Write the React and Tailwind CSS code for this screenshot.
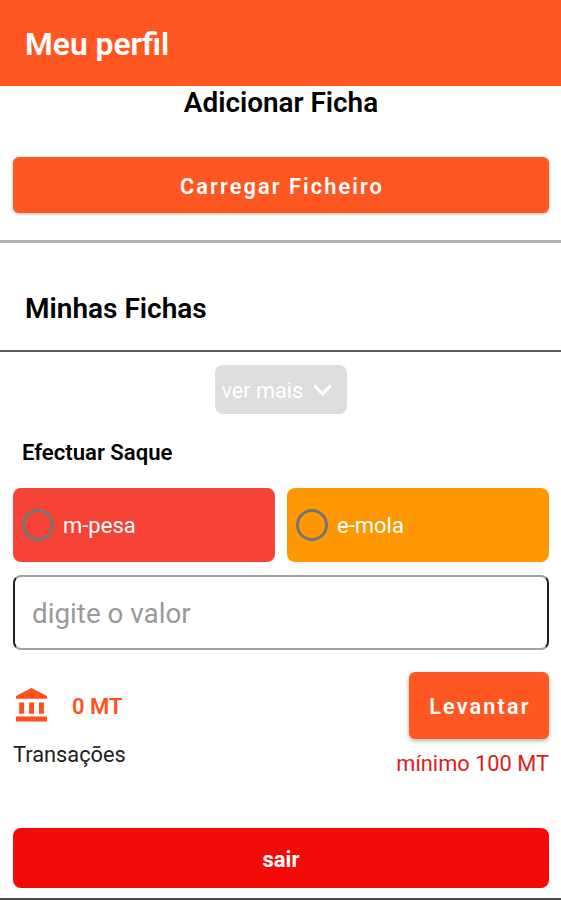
import { useState } from 'react';

const methods = [
  { id: 'm-pesa', color: 'bg-[#f74336]' },
  { id: 'e-mola', color: 'bg-[#ff9800]' },
];

function BankIcon() {
  return (
    <svg className="mb-px ml-[3px] h-[34px] w-[32px]" viewBox="0 0 32 34" fill="currentColor">
      <path d="M15.5 0 0 8v2.7h31V8zM3.2 14.5h4.9v11.2H3.2zM13.1 14.5H18v11.2h-4.9zM23 14.5h4.9v11.2H23zM0 28.6h31v4.9H0z" />
    </svg>
  );
}

function Header({ title }) {
  return (
    <header className="flex h-[86px] items-center bg-[#ff5722] px-[25px] pt-[2px]">
      <h1 className="text-[31.8px] leading-9 font-semibold whitespace-nowrap text-white">{title}</h1>
    </header>
  );
}

function UploadSection() {
  return (
    <section className="h-[157px] border-b-[3px] border-[#b3b3b3] pr-[12px] pl-[13px]">
      <h2 className="pt-px text-center text-[27.9px] leading-8 font-semibold text-black">Adicionar Ficha</h2>
      <button className="mt-[38px] block h-[56px] w-full rounded-[6px] bg-[#ff5722] pt-[4px] pl-[2px] text-[21.7px] font-semibold tracking-[2.1px] text-white shadow-[0_1px_3px_rgba(0,0,0,0.3)]">
        Carregar Ficheiro
      </button>
    </section>
  );
}

function MethodOption({ method, checked, onSelect }) {
  return (
    <button
      onClick={onSelect}
      className={`flex h-[74px] flex-1 items-center gap-[9px] rounded-[8px] pl-[9px] text-[22px] text-white ${method.color}`}
    >
      <span className="flex size-[32px] items-center justify-center rounded-full border-[3px] border-[#757575]">
        {checked && <span className="size-4 rounded-full bg-[#757575]" />}
      </span>
      <span>{method.id}</span>
    </button>
  );
}

export default function App() {
  const [method, setMethod] = useState(null);
  const [amount, setAmount] = useState('');

  return (
    <div className="h-[900px] w-full overflow-hidden border-b-2 border-[#4a4a4a] bg-white font-['Roboto',sans-serif]">
      <Header title="Meu perfil" />
      <UploadSection />

      <section className="flex h-[109px] items-center border-b-2 border-[#5c5c5c] px-[25px] pt-[24px]">
        <h2 className="text-[28px] leading-8 font-semibold text-black">Minhas Fichas</h2>
      </section>

      <div className="flex justify-center pt-[13px]">
        <button className="flex h-[49px] w-[132px] items-center gap-[10px] rounded-[8px] bg-[#dedcdd] pt-[3px] pl-[7px] text-[21.6px] text-white">
          ver mais
          <svg className="mb-[2px] w-[19px]" viewBox="0 0 18 12" fill="none" stroke="currentColor" strokeWidth="3">
            <path d="M1.2 1.5 9 9.3l7.8-7.8" />
          </svg>
        </button>
      </div>

      <section className="pt-[24px] pr-[12px] pl-[13px]">
        <h3 className="pl-[9px] text-[22.1px] leading-7 font-semibold text-black">Efectuar Saque</h3>
        <div className="mt-[22px] flex gap-[12px]">
          {methods.map((m) => (
            <MethodOption key={m.id} method={m} checked={method === m.id} onSelect={() => setMethod(m.id)} />
          ))}
        </div>
        <input
          value={amount}
          onChange={(e) => setAmount(e.target.value)}
          placeholder="digite o valor"
          className="mt-[13px] block h-[75px] w-full rounded-[8px] border-x-2 border-y-2 border-x-[#202020] border-y-[#a0a0a0] px-[17px] pt-[2px] text-[27.8px] text-black outline-none placeholder:text-[#999999]"
        />

        <div className="mt-[22px] flex justify-between">
          <div className="pt-[14px]">
            <div className="flex h-[39px] items-center gap-[24px] text-[#ff5018]">
              <BankIcon />
              <span className="pt-px text-[22px] font-semibold">0 MT</span>
            </div>
            <p className="mt-[16px] text-[21.8px] leading-7 text-[#222222]">Transações</p>
          </div>
          <div className="flex flex-col items-end">
            <button className="h-[67px] w-[140px] rounded-[6px] bg-[#ff5722] pt-[3px] pl-[2px] text-[21.6px] font-semibold tracking-[2.2px] text-white shadow-[0_2px_4px_rgba(0,0,0,0.3)]">
              Levantar
            </button>
            <p className="mt-[11px] text-[21.8px] leading-7 text-[#dd1c1c]">mínimo 100 MT</p>
          </div>
        </div>

        <button className="mt-[50px] block h-[60px] w-full rounded-[8px] bg-[#f40b08] pt-[2px] text-[22px] font-bold text-white">
          sair
        </button>
      </section>
    </div>
  );
}
